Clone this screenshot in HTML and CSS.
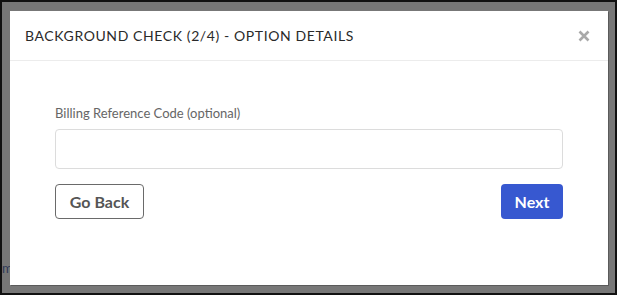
FILE: index.html
```html
<!DOCTYPE html>
<html>
<head>
<meta charset="utf-8">
<link rel="stylesheet" href="styles.css">
</head>
<body>
<div class="frame">
  <span class="peek">m</span>
  <div class="modal">
    <div class="modal-header">
      <h1 class="modal-title">BACKGROUND CHECK (2/4) - OPTION DETAILS</h1>
      <button class="close" aria-label="Close">
        <svg width="12" height="12" viewBox="0 0 12 12"><path d="M1.5 1.5 L10.5 10.5 M10.5 1.5 L1.5 10.5" stroke="#a9a9a9" stroke-width="2.6" stroke-linecap="butt"/></svg>
      </button>
    </div>
    <div class="modal-body">
      <label class="field-label" for="ref">Billing Reference Code (optional)</label>
      <input id="ref" class="field-input" type="text">
      <div class="actions">
        <button class="btn btn-back">Go Back</button>
        <button class="btn btn-next">Next</button>
      </div>
    </div>
  </div>
</div>
</body>
</html>
```

FILE: styles.css
```css
* { box-sizing: border-box; }
html, body { margin: 0; padding: 0; }
body { font-family: Lato, "Noto Sans", sans-serif; }

.frame {
  position: relative;
  width: 617px;
  height: 295px;
  border: 2px solid #111;
  background: #777;
  padding: 9px 7px 8px 8px;
  display: flex;
}

.peek {
  position: absolute;
  left: 0;
  top: 258px;
  font-size: 13px;
  color: #303a58;
}

.modal {
  position: relative;
  z-index: 1;
  flex: 1;
  background: #fff;
  box-shadow: 1px 1px 0 #5a5a5a;
  display: flex;
  flex-direction: column;
}

.modal-header {
  height: 50px;
  border-bottom: 1px solid #ececec;
  display: flex;
  align-items: center;
  justify-content: space-between;
  padding: 0 18px 0 15px;
}

.modal-title {
  margin: 0;
  font-size: 14px;
  font-weight: 400;
  letter-spacing: 0.6px;
  color: #2a2a2a;
}

.close {
  border: 0;
  background: none;
  padding: 0;
  line-height: 0;
  display: flex;
}

.modal-body {
  padding: 44px 45px 0 45px;
  display: flex;
  flex-direction: column;
}

.field-label {
  font-size: 13px;
  color: #666;
  line-height: 16px;
}

.field-input {
  margin-top: 8px;
  height: 40px;
  border: 1px solid #dcdcdc;
  border-radius: 4px;
  font-size: 14px;
  padding: 0 10px;
}

.actions {
  margin-top: 15px;
  display: flex;
  justify-content: space-between;
}

.btn {
  height: 35px;
  border-radius: 4px;
  font-family: Lato, "Noto Sans", sans-serif;
  font-size: 16px;
  font-weight: 700;
  padding: 0 12px;
}

.btn-back {
  width: 89px;
  background: #fff;
  border: 1px solid #6a6a6a;
  color: #555;
}

.btn-next {
  width: 62px;
  background: #3758d0;
  border: 0;
  color: #fff;
}
```
